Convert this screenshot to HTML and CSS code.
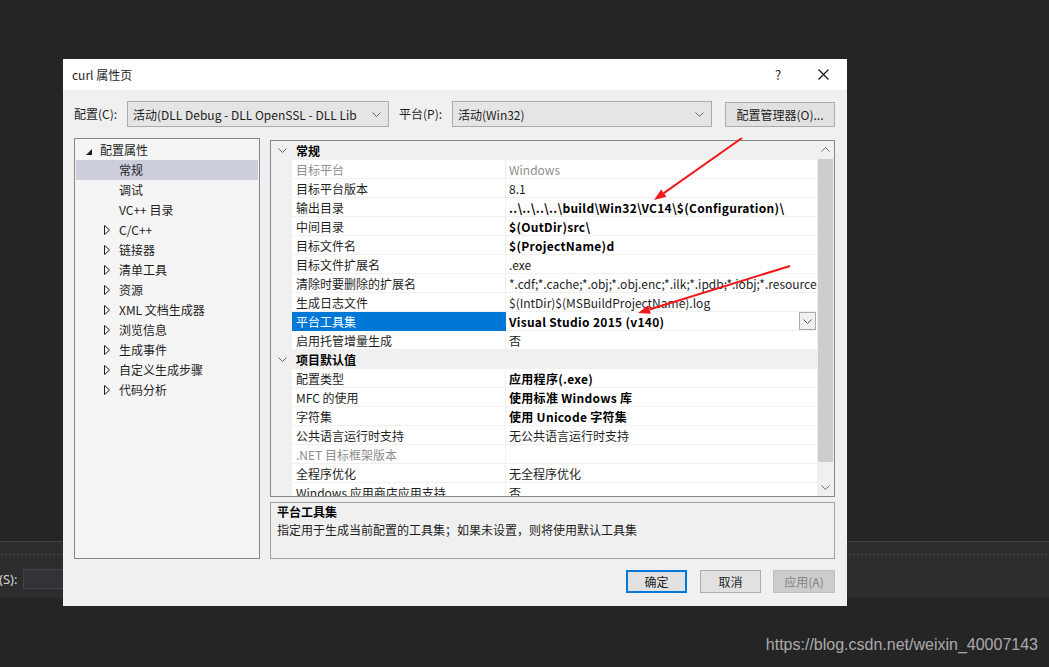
FILE: index.html
```html
<!DOCTYPE html>
<html lang="zh-CN">
<head>
  <meta charset="UTF-8">
  <title>curl 属性页</title>
  <link rel="stylesheet" href="styles.css">
</head>
<body>
  <div class="ide">
    <div class="ide-editor"></div>
    <div class="ide-panel">
      <div class="ide-dots"></div>
      <div class="ide-find">
        <span class="ide-label">(S):</span>
        <span class="ide-input"></span>
      </div>
    </div>
  </div>

  <div class="dialog">
    <div class="titlebar">
      <span class="title">curl 属性页</span>
      <span class="help">?</span>
      <span class="close">
        <svg width="11" height="11" viewBox="0 0 11 11"><path d="M0.5 0.5L10.5 10.5M10.5 0.5L0.5 10.5" stroke="#111" stroke-width="1.1"/></svg>
      </span>
    </div>

    <div class="toolbar">
      <label class="tb-label">配置(C):</label>
      <div class="combo combo-config">
        <span class="combo-text">活动(DLL Debug - DLL OpenSSL - DLL Lib</span>
        <svg class="chev" width="9" height="5" viewBox="0 0 9 5"><path d="M0.5 0.5L4.5 4.5L8.5 0.5" fill="none" stroke="#666"/></svg>
      </div>
      <label class="tb-label tb-gap">平台(P):</label>
      <div class="combo combo-platform">
        <span class="combo-text">活动(Win32)</span>
        <svg class="chev" width="9" height="5" viewBox="0 0 9 5"><path d="M0.5 0.5L4.5 4.5L8.5 0.5" fill="none" stroke="#666"/></svg>
      </div>
      <button class="btn btn-manager">配置管理器(O)...</button>
    </div>

    <div class="main">
      <ul class="tree">
        <li class="node lvl0"><span class="twisty"><svg width="6" height="6" viewBox="0 0 6 6"><path d="M6 0V6H0Z" fill="#1e1e1e"/></svg></span>配置属性</li>
        <li class="node lvl1 selected"><span class="twisty"></span>常规</li>
        <li class="node lvl1"><span class="twisty"></span>调试</li>
        <li class="node lvl1"><span class="twisty"></span>VC++ 目录</li>
        <li class="node lvl1"><span class="twisty"><svg width="6" height="10" viewBox="0 0 6 10"><path d="M0.5 0.5L5.5 5L0.5 9.5Z" fill="none" stroke="#1e1e1e"/></svg></span>C/C++</li>
        <li class="node lvl1"><span class="twisty"><svg width="6" height="10" viewBox="0 0 6 10"><path d="M0.5 0.5L5.5 5L0.5 9.5Z" fill="none" stroke="#1e1e1e"/></svg></span>链接器</li>
        <li class="node lvl1"><span class="twisty"><svg width="6" height="10" viewBox="0 0 6 10"><path d="M0.5 0.5L5.5 5L0.5 9.5Z" fill="none" stroke="#1e1e1e"/></svg></span>清单工具</li>
        <li class="node lvl1"><span class="twisty"><svg width="6" height="10" viewBox="0 0 6 10"><path d="M0.5 0.5L5.5 5L0.5 9.5Z" fill="none" stroke="#1e1e1e"/></svg></span>资源</li>
        <li class="node lvl1"><span class="twisty"><svg width="6" height="10" viewBox="0 0 6 10"><path d="M0.5 0.5L5.5 5L0.5 9.5Z" fill="none" stroke="#1e1e1e"/></svg></span>XML 文档生成器</li>
        <li class="node lvl1"><span class="twisty"><svg width="6" height="10" viewBox="0 0 6 10"><path d="M0.5 0.5L5.5 5L0.5 9.5Z" fill="none" stroke="#1e1e1e"/></svg></span>浏览信息</li>
        <li class="node lvl1"><span class="twisty"><svg width="6" height="10" viewBox="0 0 6 10"><path d="M0.5 0.5L5.5 5L0.5 9.5Z" fill="none" stroke="#1e1e1e"/></svg></span>生成事件</li>
        <li class="node lvl1"><span class="twisty"><svg width="6" height="10" viewBox="0 0 6 10"><path d="M0.5 0.5L5.5 5L0.5 9.5Z" fill="none" stroke="#1e1e1e"/></svg></span>自定义生成步骤</li>
        <li class="node lvl1"><span class="twisty"><svg width="6" height="10" viewBox="0 0 6 10"><path d="M0.5 0.5L5.5 5L0.5 9.5Z" fill="none" stroke="#1e1e1e"/></svg></span>代码分析</li>
      </ul>

      <div class="right">
        <div class="grid">
          <div class="rows">
            <div class="row cat">
              <span class="gut"><svg width="9" height="5" viewBox="0 0 9 5"><path d="M0.5 0.5L4.5 4.5L8.5 0.5" fill="none" stroke="#666"/></svg></span>
              <span class="name">常规</span>
            </div>
            <div class="row dim"><span class="gut"></span><span class="name">目标平台</span><span class="val">Windows</span></div>
            <div class="row"><span class="gut"></span><span class="name">目标平台版本</span><span class="val">8.1</span></div>
            <div class="row"><span class="gut"></span><span class="name">输出目录</span><span class="val bold">..\..\..\..\build\Win32\VC14\$(Configuration)\</span></div>
            <div class="row"><span class="gut"></span><span class="name">中间目录</span><span class="val bold">$(OutDir)src\</span></div>
            <div class="row"><span class="gut"></span><span class="name">目标文件名</span><span class="val bold">$(ProjectName)d</span></div>
            <div class="row"><span class="gut"></span><span class="name">目标文件扩展名</span><span class="val">.exe</span></div>
            <div class="row"><span class="gut"></span><span class="name">清除时要删除的扩展名</span><span class="val">*.cdf;*.cache;*.obj;*.obj.enc;*.ilk;*.ipdb;*.iobj;*.resources;*.tlb;*.tli;*.tlh;*.tmp;*.rsp</span></div>
            <div class="row"><span class="gut"></span><span class="name">生成日志文件</span><span class="val">$(IntDir)$(MSBuildProjectName).log</span></div>
            <div class="row selected"><span class="gut"></span><span class="name">平台工具集</span>
              <span class="val bold"><span class="val-text">Visual Studio 2015 (v140)</span>
                <span class="drop"><svg width="9" height="5" viewBox="0 0 9 5"><path d="M0.5 0.5L4.5 4.5L8.5 0.5" fill="none" stroke="#555"/></svg></span>
              </span>
            </div>
            <div class="row"><span class="gut"></span><span class="name">启用托管增量生成</span><span class="val">否</span></div>
            <div class="row cat">
              <span class="gut"><svg width="9" height="5" viewBox="0 0 9 5"><path d="M0.5 0.5L4.5 4.5L8.5 0.5" fill="none" stroke="#666"/></svg></span>
              <span class="name">项目默认值</span>
            </div>
            <div class="row"><span class="gut"></span><span class="name">配置类型</span><span class="val bold">应用程序(.exe)</span></div>
            <div class="row"><span class="gut"></span><span class="name">MFC 的使用</span><span class="val bold">使用标准 Windows 库</span></div>
            <div class="row"><span class="gut"></span><span class="name">字符集</span><span class="val bold">使用 Unicode 字符集</span></div>
            <div class="row"><span class="gut"></span><span class="name">公共语言运行时支持</span><span class="val">无公共语言运行时支持</span></div>
            <div class="row dim"><span class="gut"></span><span class="name">.NET 目标框架版本</span><span class="val"></span></div>
            <div class="row"><span class="gut"></span><span class="name">全程序优化</span><span class="val">无全程序优化</span></div>
            <div class="row"><span class="gut"></span><span class="name">Windows 应用商店应用支持</span><span class="val">否</span></div>
          </div>
          <div class="scrollbar">
            <span class="sb-btn"><svg width="9" height="5" viewBox="0 0 9 5"><path d="M0.5 4.5L4.5 0.5L8.5 4.5" fill="none" stroke="#707070"/></svg></span>
            <span class="sb-track"><span class="sb-thumb"></span></span>
            <span class="sb-btn"><svg width="9" height="5" viewBox="0 0 9 5"><path d="M0.5 0.5L4.5 4.5L8.5 0.5" fill="none" stroke="#707070"/></svg></span>
          </div>
        </div>

        <div class="desc">
          <div class="desc-title">平台工具集</div>
          <div class="desc-text">指定用于生成当前配置的工具集；如果未设置，则将使用默认工具集</div>
        </div>
      </div>
    </div>

    <div class="actions">
      <button class="btn btn-ok">确定</button>
      <button class="btn">取消</button>
      <button class="btn btn-disabled">应用(A)</button>
    </div>
  </div>

  <!-- annotation arrows drawn over the screenshot -->
  <svg class="arrows" width="1049" height="667" viewBox="0 0 1049 667">
    <line x1="742" y1="138" x2="663.8" y2="193.1" stroke="#f2171b" stroke-width="2"/>
    <polygon points="654,200 666.4,196.8 661.2,189.4" fill="#f2171b"/>
    <line x1="790" y1="266" x2="649.5" y2="309.5" stroke="#f2171b" stroke-width="2"/>
    <polygon points="638,313 650.8,313.8 648.2,305.2" fill="#f2171b"/>
  </svg>

  <div class="watermark">https://blog.csdn.net/weixin_40007143</div>
</body>
</html>
```

FILE: styles.css
```css
* {
  box-sizing: border-box;
}
html, body {
  margin: 0;
}
body {
  position: relative;
  width: 1049px;
  height: 667px;
  overflow: hidden;
  background: #252526;
  font-family: "Noto Sans CJK SC", sans-serif;
  font-size: 12px;
  color: #1e1e1e;
}

/* IDE behind the dialog */
.ide-editor {
  height: 541px;
}
.ide-panel {
  height: 57px;
  background: #2d2d30;
  border-top: 1px solid #3f3f46;
}
.ide-dots {
  height: 3px;
  margin-top: 11px;
  background-image: radial-gradient(circle, #4a4a4f 0.8px, transparent 1px);
  background-size: 4px 3px;
}
.ide-find {
  display: flex;
  align-items: center;
  margin-top: 13px;
  margin-left: -1px;
  gap: 6px;
}
.ide-label {
  color: #d4d4d4;
  font-family: "Noto Sans", sans-serif;
  font-size: 13px;
  line-height: 20px;
}
.ide-input {
  width: 60px;
  height: 20px;
  background: #333337;
  border: 1px solid #434346;
}

/* dialog window */
.dialog {
  position: absolute;
  left: 63px;
  top: 59px;
  width: 784px;
  height: 547px;
  background: #f0f0f0;
  display: flex;
  flex-direction: column;
}
.titlebar {
  height: 31px;
  background: #fff;
  display: flex;
  align-items: center;
}
.title {
  padding-left: 9px;
  line-height: 31px;
}
.help {
  margin-left: auto;
  width: 44px;
  text-align: center;
  font-size: 13px;
}
.close {
  width: 46px;
  height: 31px;
  margin-right: 1px;
  display: flex;
  align-items: center;
  justify-content: center;
}

.toolbar {
  display: flex;
  align-items: center;
  padding: 11px 12px 0 11px;
}
.tb-label {
  width: 53px;
  line-height: 26px;
}
.tb-gap {
  margin-left: 10px;
}
.combo {
  height: 26px;
  background: #e5e5e5;
  border: 1px solid #acacac;
  display: flex;
  align-items: center;
  padding: 0 7px 0 5px;
}
.combo-config {
  width: 262px;
}
.combo-platform {
  width: 260px;
}
.combo-text {
  flex: 1;
  white-space: nowrap;
  overflow: hidden;
}
.chev {
  flex: none;
  margin-left: 4px;
}
.btn {
  height: 23px;
  padding: 0;
  background: #e1e1e1;
  border: 1px solid #adadad;
  font-family: inherit;
  font-size: 12px;
  color: #1e1e1e;
}
.btn-manager {
  margin-left: 13px;
  width: 110px;
  height: 25px;
}

.main {
  display: flex;
  gap: 10px;
  margin-top: 11px;
  padding-left: 11px;
}

/* category tree */
.tree {
  list-style: none;
  margin: 0;
  padding: 1px 0 0;
  width: 186px;
  height: 421px;
  background: #f5f5f5;
  border: 1px solid #828790;
}
.node {
  display: flex;
  align-items: center;
  height: 20px;
  line-height: 20px;
  white-space: nowrap;
}
.lvl0 {
  padding-left: 10px;
}
.lvl0 .twisty {
  padding-left: 1px;
  padding-top: 3px;
}
.lvl1 {
  padding-left: 29px;
}
.twisty {
  width: 15px;
  display: flex;
  align-items: center;
}
.node.selected {
  background: #cccedb;
  margin: 0 1px;
  padding-left: 28px;
}

/* property grid */
.right {
  width: 565px;
  display: flex;
  flex-direction: column;
}
.grid {
  margin-top: 2px;
  height: 357px;
  border: 1px solid #828790;
  background: #fff;
  display: flex;
}
.rows {
  width: 546px;
  overflow: hidden;
}
.row {
  display: grid;
  grid-template-columns: 21px 214px 311px;
  height: 19px;
  line-height: 17px;
  white-space: nowrap;
}
.gut {
  background: #f0f0f0;
  display: flex;
  align-items: center;
  justify-content: center;
  padding-left: 1px;
}
.name {
  padding: 1px 0 0 4px;
  border-right: 1px solid #f0f0f0;
  border-bottom: 1px solid #f0f0f0;
  overflow: hidden;
}
.val {
  padding: 1px 0 0 3px;
  border-bottom: 1px solid #f0f0f0;
  overflow: hidden;
}
.bold {
  font-weight: bold;
  color: #000;
  letter-spacing: 0.3px;
}
.row.cat {
  background: #f0f0f0;
}
.row.cat .name {
  grid-column: span 2;
  border: none;
  font-weight: bold;
  color: #000;
}
.row.dim {
  color: #8d8d8d;
}
.row.selected .name {
  background: #0078d7;
  color: #fff;
  border-color: #0078d7;
}
.row.selected .val {
  display: flex;
  padding-top: 0;
  padding-right: 1px;
}
.val-text {
  flex: 1;
  padding-top: 1px;
}
.drop {
  width: 17px;
  height: 18px;
  background: #f0f0f0;
  border: 1px solid #acacac;
  display: flex;
  align-items: center;
  justify-content: center;
}

.scrollbar {
  width: 17px;
  background: #f0f0f0;
  display: flex;
  flex-direction: column;
}
.sb-btn {
  height: 17px;
  display: flex;
  align-items: center;
  justify-content: center;
}
.sb-track {
  flex: 1;
  padding: 1px 1px 0;
}
.sb-thumb {
  display: block;
  height: 303px;
  background: #cdcdcd;
}

.desc {
  margin-top: 5px;
  height: 57px;
  border: 1px solid #a0a0a0;
  padding: 0 6px;
}
.desc-title {
  font-weight: bold;
  color: #000;
  line-height: 18px;
}
.desc-text {
  line-height: 18px;
}

.actions {
  display: flex;
  justify-content: flex-end;
  gap: 12px;
  margin-top: 11px;
  padding-right: 12px;
}
.actions .btn {
  width: 61px;
}
.actions .btn-disabled {
  width: 62px;
}
.btn-ok {
  border: 2px solid #0078d7;
  margin-right: 1px;
}
.btn-disabled {
  background: #cccccc;
  border-color: #bfbfbf;
  color: #838383;
}

.arrows {
  position: absolute;
  left: 0;
  top: 0;
  pointer-events: none;
}
.watermark {
  position: absolute;
  right: 11px;
  top: 634px;
  font-family: "Liberation Sans", Arial, sans-serif;
  font-size: 16px;
  line-height: 22px;
  color: rgba(255, 255, 255, 0.62);
}
```
